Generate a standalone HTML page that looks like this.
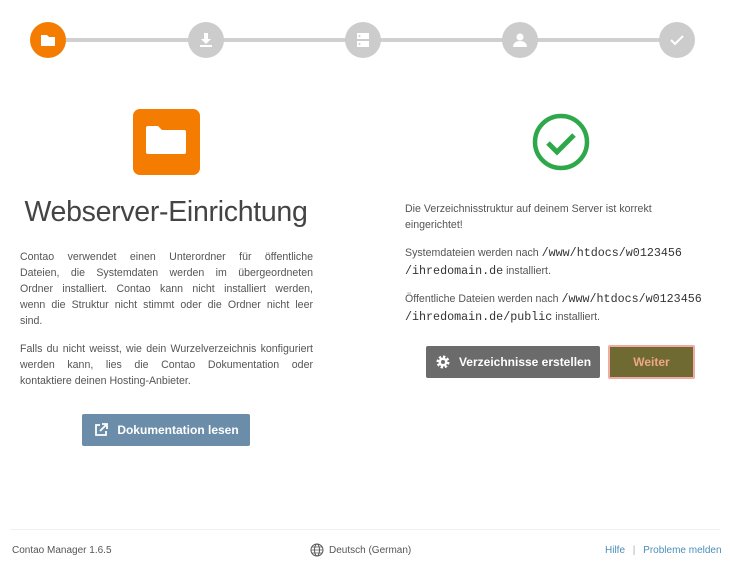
<!DOCTYPE html>
<html><head><meta charset="utf-8"><style>
*{margin:0;padding:0;box-sizing:border-box}
body{width:730px;height:568px;background:#fff;font-family:"Liberation Sans",sans-serif;color:#555;position:relative;overflow:hidden}
.abs{position:absolute}
.dot{position:absolute;top:22px;width:36px;height:36px;border-radius:50%;background:#ccc}
.t{font-size:10.6px;line-height:16px;color:#555}
.j div{text-align:justify;text-align-last:justify;white-space:nowrap;height:16px}
.j div.l{text-align-last:left}
.btn{position:absolute;color:#fff;font-weight:bold;font-size:12px;display:flex;align-items:center;justify-content:center;border-radius:2px}
.mono{font-family:"Liberation Mono","DejaVu Sans Mono",monospace;font-size:11.7px;color:#333}
</style></head><body>
<div class="abs" style="left:48px;top:38px;width:630px;height:4px;background:#d0d0d0"></div>
<div class="dot" style="left:30px;background:#f47c00"><svg width="36" height="36"><path d="M11 13h6l2 2h6v9h-14z" fill="#fff"/></svg></div>
<div class="dot" style="left:188px"><svg width="36" height="36"><path d="M16 11h4v6h3l-5 5-5-5h3z" fill="#fff"/><rect x="12" y="23" width="12" height="2" fill="#fff"/></svg></div>
<div class="dot" style="left:345px"><svg width="36" height="36"><rect x="12" y="11" width="12" height="6" fill="#fff"/><rect x="12" y="19" width="12" height="6" fill="#fff"/><circle cx="14.5" cy="14" r="1" fill="#ccc"/><circle cx="14.5" cy="22" r="1" fill="#ccc"/></svg></div>
<div class="dot" style="left:502px"><svg width="36" height="36"><circle cx="18" cy="15" r="3.5" fill="#fff"/><path d="M11 25c0-4 3-6 7-6s7 2 7 6z" fill="#fff"/></svg></div>
<div class="dot" style="left:659px"><svg width="36" height="36"><path d="M12 18l4 4 8-8" stroke="#fff" stroke-width="2" fill="none"/></svg></div>

<div class="abs" style="left:133px;top:109px;width:67px;height:66px;background:#f47c00;border-radius:7px"><svg width="67" height="66"><path d="M13 19a2 2 0 0 1 2-2h10l4 4h22a2 2 0 0 1 2 2v20a2 2 0 0 1-2 2h-36a2 2 0 0 1-2-2z" fill="#fff"/></svg></div>
<div class="abs" style="left:0;width:332px;top:196px;text-align:center;font-size:28.5px;font-weight:300;color:#444;letter-spacing:-0.3px">Webserver-Einrichtung</div>
<div class="abs t j" style="left:20px;top:249px;width:293px">
<div>Contao verwendet einen Unterordner für öffentliche</div>
<div>Dateien, die Systemdaten werden im übergeordneten</div>
<div>Ordner installiert. Contao kann nicht installiert werden,</div>
<div>wenn die Struktur nicht stimmt oder die Ordner nicht leer</div>
<div class="l">sind.</div>
<div style="height:12px"></div>
<div>Falls du nicht weisst, wie dein Wurzelverzeichnis konfiguriert</div>
<div>werden kann, lies die Contao Dokumentation oder</div>
<div class="l">kontaktiere deinen Hosting-Anbieter.</div>
</div>
<div class="btn" style="left:82px;top:414px;width:168px;height:32px;background:#6b8da9"><svg width="16" height="16" style="margin-right:8px"><path d="M7 3H3v10h10V9" stroke="#fff" stroke-width="1.8" fill="none"/><path d="M9 2h5v5M14 2L7 9" stroke="#fff" stroke-width="1.8" fill="none"/></svg>Dokumentation lesen</div>

<svg class="abs" style="left:530px;top:112px" width="62" height="62"><circle cx="31" cy="30" r="26" stroke="#2ea84a" stroke-width="4.5" fill="none"/><path d="M18 31l9 9 17-17" stroke="#2ea84a" stroke-width="5" fill="none"/></svg>
<div class="abs t" style="left:405px;top:201px;width:320px;white-space:nowrap">
<div>Die Verzeichnisstruktur auf deinem Server ist korrekt</div>
<div>eingerichtet!</div>
<div style="margin-top:11px;line-height:18px">Systemdateien werden nach <span class="mono">/www/htdocs/w0123456</span><br><span class="mono">/ihredomain.de</span> installiert.</div>
<div style="margin-top:10px;line-height:18px">Öffentliche Dateien werden nach <span class="mono">/www/htdocs/w0123456</span><br><span class="mono">/ihredomain.de/public</span> installiert.</div>
</div>
<div class="btn" style="left:426px;top:346px;width:174px;height:32px;background:#6b6b6b"><svg width="16" height="16" style="margin-right:8px"><circle cx="8" cy="8" r="5" stroke="#fff" stroke-width="3" fill="none" stroke-dasharray="2.2 1.7"/><circle cx="8" cy="8" r="4.5" fill="#fff"/><circle cx="8" cy="8" r="2" fill="#6b6b6b"/></svg>Verzeichnisse erstellen</div>
<div class="btn" style="left:608px;top:345px;width:87px;height:34px;background:#6f6a32;border:2px solid #f2aaa5;color:#f0a783">Weiter</div>

<div class="abs" style="left:10px;top:529px;width:710px;height:1px;background:#f0f0f0"></div>
<div class="abs" style="left:12px;top:545px;font-size:10px;color:#555">Contao Manager 1.6.5</div>
<div class="abs" style="left:310px;top:543px;font-size:10px;color:#555;display:flex;align-items:center"><svg width="14" height="14" style="margin-right:5px"><circle cx="7" cy="7" r="6" stroke="#555" fill="none"/><ellipse cx="7" cy="7" rx="2.5" ry="6" stroke="#555" fill="none"/><path d="M1 7h12M2 4h10M2 10h10" stroke="#555" stroke-width=".8"/></svg>Deutsch (German)</div>
<div class="abs" style="left:605px;top:545px;font-size:10px;color:#4a8fb8">Hilfe <span style="color:#aaa;margin:0 5px">|</span> Probleme melden</div>
</body></html>
